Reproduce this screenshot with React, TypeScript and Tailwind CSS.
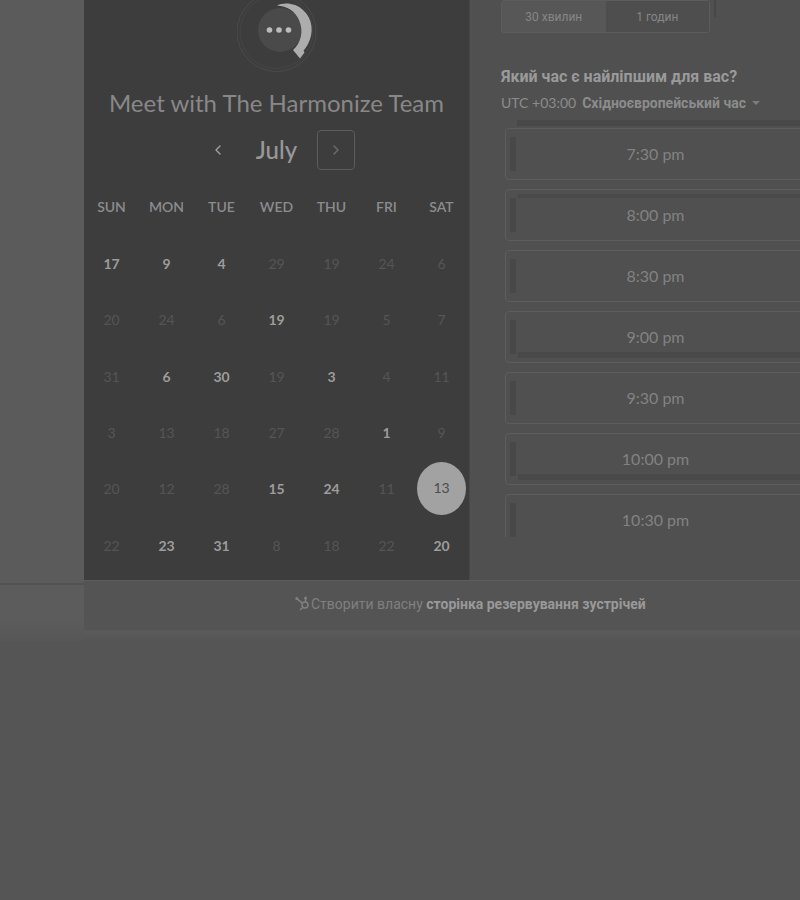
import React from "react";
import { ChevronLeft, ChevronRight } from "lucide-react";

const weekDays = ["SUN", "MON", "TUE", "WED", "THU", "FRI", "SAT"];

type Day = { n: number; open?: boolean; selected?: boolean };

const weeks: Day[][] = [
  [{ n: 17, open: true }, { n: 9, open: true }, { n: 4, open: true }, { n: 29 }, { n: 19 }, { n: 24 }, { n: 6 }],
  [{ n: 20 }, { n: 24 }, { n: 6 }, { n: 19, open: true }, { n: 19 }, { n: 5 }, { n: 7 }],
  [{ n: 31 }, { n: 6, open: true }, { n: 30, open: true }, { n: 19 }, { n: 3, open: true }, { n: 4 }, { n: 11 }],
  [{ n: 3 }, { n: 13 }, { n: 18 }, { n: 27 }, { n: 28 }, { n: 1, open: true }, { n: 9 }],
  [{ n: 20 }, { n: 12 }, { n: 28 }, { n: 15, open: true }, { n: 24, open: true }, { n: 11 }, { n: 13, selected: true }],
  [{ n: 22 }, { n: 23, open: true }, { n: 31, open: true }, { n: 8 }, { n: 18 }, { n: 22 }, { n: 20, open: true }],
];

const slots: { time: string; band?: "top" | "bottom" }[] = [
  { time: "7:30 pm" },
  { time: "8:00 pm", band: "top" },
  { time: "8:30 pm" },
  { time: "9:00 pm", band: "bottom" },
  { time: "9:30 pm" },
  { time: "10:00 pm", band: "bottom" },
  { time: "10:30 pm" },
];

function Logo() {
  return (
    <svg className="mx-auto block h-[72px] w-20" viewBox="237 0 80 72" aria-hidden="true">
      <circle cx="276.5" cy="32" r="39.500" fill="none" stroke="#4b4b4b" strokeWidth="1" />
      <circle cx="276.5" cy="32" r="36.500" fill="none" stroke="#454545" strokeWidth="1" />
      <circle cx="280" cy="30" r="22" fill="#4a4a4a" />
      <path d="M277 5.500C284 2 296 3 303 10C313 19 314 33 308 44C306.500 47 305 49 303.500 50.500L304.500 52.500L300 58.500L293 50C301 43 304 31 299 20C295 11 287 6 277 5.500Z" fill="#adadad" />
      <g fill="#bcbcbc">
        <circle cx="269.500" cy="30" r="2.800" />
        <circle cx="279" cy="30" r="2.800" />
        <circle cx="288.500" cy="30" r="2.800" />
      </g>
    </svg>
  );
}

function HubIcon() {
  return (
    <svg className="h-4 w-4" viewBox="0 0 16 16" fill="none" stroke="#808080" strokeWidth="1.500" aria-hidden="true">
      <circle cx="10" cy="9" r="3" />
      <path d="M10.500 6V2.500M7.500 7.200L2 2.800M8 11.200L5 14" />
      <circle cx="1.800" cy="2.500" r="0.800" fill="#808080" />
      <circle cx="10.600" cy="2" r="0.800" fill="#808080" />
    </svg>
  );
}

function dayClass(day: Day) {
  if (day.selected) return "h-[53px] w-[49px] rounded-[50%] bg-[#a2a2a2] text-[#4c4c4c]";
  if (day.open) return "font-bold text-[#9c9c9c]";
  return "text-[#555555]";
}

function Calendar() {
  return (
    <section className="w-[386px] shrink-0 border-r border-[#474747] bg-[#3d3d3d] font-[Lato,sans-serif]">
      <Logo />
      <h1 className="mt-[15px] text-center text-2xl leading-8 whitespace-nowrap text-[#888888]">Meet with The Harmonize Team</h1>
      <div className="mt-[11px] flex items-center justify-center">
        <button aria-label="Previous month" className="flex h-10 w-[38px] items-center justify-center text-[#a0a0a0]">
          <ChevronLeft size={16} />
        </button>
        <span className="w-20 text-center text-2xl font-medium text-[#989898]">July</span>
        <button
          aria-label="Next month"
          className="flex h-10 w-[38px] items-center justify-center rounded border border-[#5c5c5c] text-[#6c6c6c]"
        >
          <ChevronRight size={16} />
        </button>
      </div>
      <table className="mt-[9px] h-[394px] w-full table-fixed text-center text-sm">
        <thead>
          <tr className="h-14">
            {weekDays.map((d) => (
              <th key={d} className="p-0 font-semibold text-[#8c8c8c]">{d}</th>
            ))}
          </tr>
        </thead>
        <tbody>
          {weeks.map((week, i) => (
            <tr key={i} className="h-14">
              {week.map((day, j) => (
                <td key={j} className="p-0 align-middle">
                  <button className={`align-middle ${dayClass(day)}`}>{day.n}</button>
                </td>
              ))}
            </tr>
          ))}
        </tbody>
      </table>
    </section>
  );
}

function Slot({ time, band }: { time: string; band?: "top" | "bottom" }) {
  return (
    <button className="relative h-[52px] shrink-0 rounded-sm border border-[#5d5d5d] text-base text-[#828282]">
      <span className="absolute inset-y-2 left-1 w-1.5 bg-[#484848]" />
      {band === "top" && <span className="absolute top-1 right-0 left-3 h-1 bg-[#494949]" />}
      {band === "bottom" && <span className="absolute right-0 bottom-1 left-3 h-1.5 bg-[#494949]" />}
      {time}
    </button>
  );
}

function Times() {
  return (
    <section className="min-w-0 flex-1 overflow-hidden bg-[#505050] pl-[31px] font-[Roboto,sans-serif]">
      <div className="flex h-[33px] items-start gap-1">
        <div className="flex h-[33px] w-[209px] rounded-[3px] border border-[#5c5c5c] text-xs text-[#868686]">
          <button className="flex-1 bg-[#575757]">30 хвилин</button>
          <button className="flex-1 bg-[#4e4e4e]">1 годин</button>
        </div>
        <span className="h-[17px] w-0.5 bg-[#474747]" />
      </div>
      <h2 className="mt-8 text-base leading-6 font-bold whitespace-nowrap text-[#9a9a9a]">Який час є найліпшим для вас?</h2>
      <button className="mt-1 flex h-5 items-center text-sm whitespace-nowrap text-[#8c8c8c]">
        <span className="font-[Lato,sans-serif]">UTC +03:00</span>
        <b className="ml-1.5">Східноєвропейський час</b>
        <span className="ml-1.5 border-x-4 border-t-4 border-x-transparent border-t-[#7c7c7c]" />
      </button>
      <div className="mt-[7px] ml-4 h-1.5 bg-[#484848]" />
      <div className="mt-0.5 -mr-1.5 ml-1 flex h-[409px] flex-col gap-[9px] overflow-hidden font-[Lato,sans-serif]">
        {slots.map((s) => (
          <Slot key={s.time} {...s} />
        ))}
      </div>
    </section>
  );
}

export default function App() {
  return (
    <main className="min-h-screen overflow-x-hidden bg-[#555555]">
      <div className="flex">
        <div className="flex w-[84px] shrink-0 flex-col">
          <div className="h-[585px] border-b-2 border-[#525252] bg-[#5b5b5b]" />
          <div className="flex-1 bg-linear-to-b from-[#5c5c5c] from-60% to-[#575757]" />
        </div>
        <div className="min-w-0 flex-1">
          <div className="flex h-[580px]">
            <Calendar />
            <Times />
          </div>
          <footer className="flex h-[51px] items-center border-t border-b border-t-[#5d5d5d] border-b-[#595959] bg-[#545454] pb-1 pl-[211px] font-[Roboto,sans-serif] text-sm whitespace-nowrap text-[#808080]">
            <HubIcon />
            <a href="#create">
              Створити власну <b className="text-[#999999]">сторінка резервування зустрічей</b>
            </a>
          </footer>
          <div className="h-2.5 bg-linear-to-b from-[#5b5b5b] to-[#555555]" />
        </div>
      </div>
    </main>
  );
}
